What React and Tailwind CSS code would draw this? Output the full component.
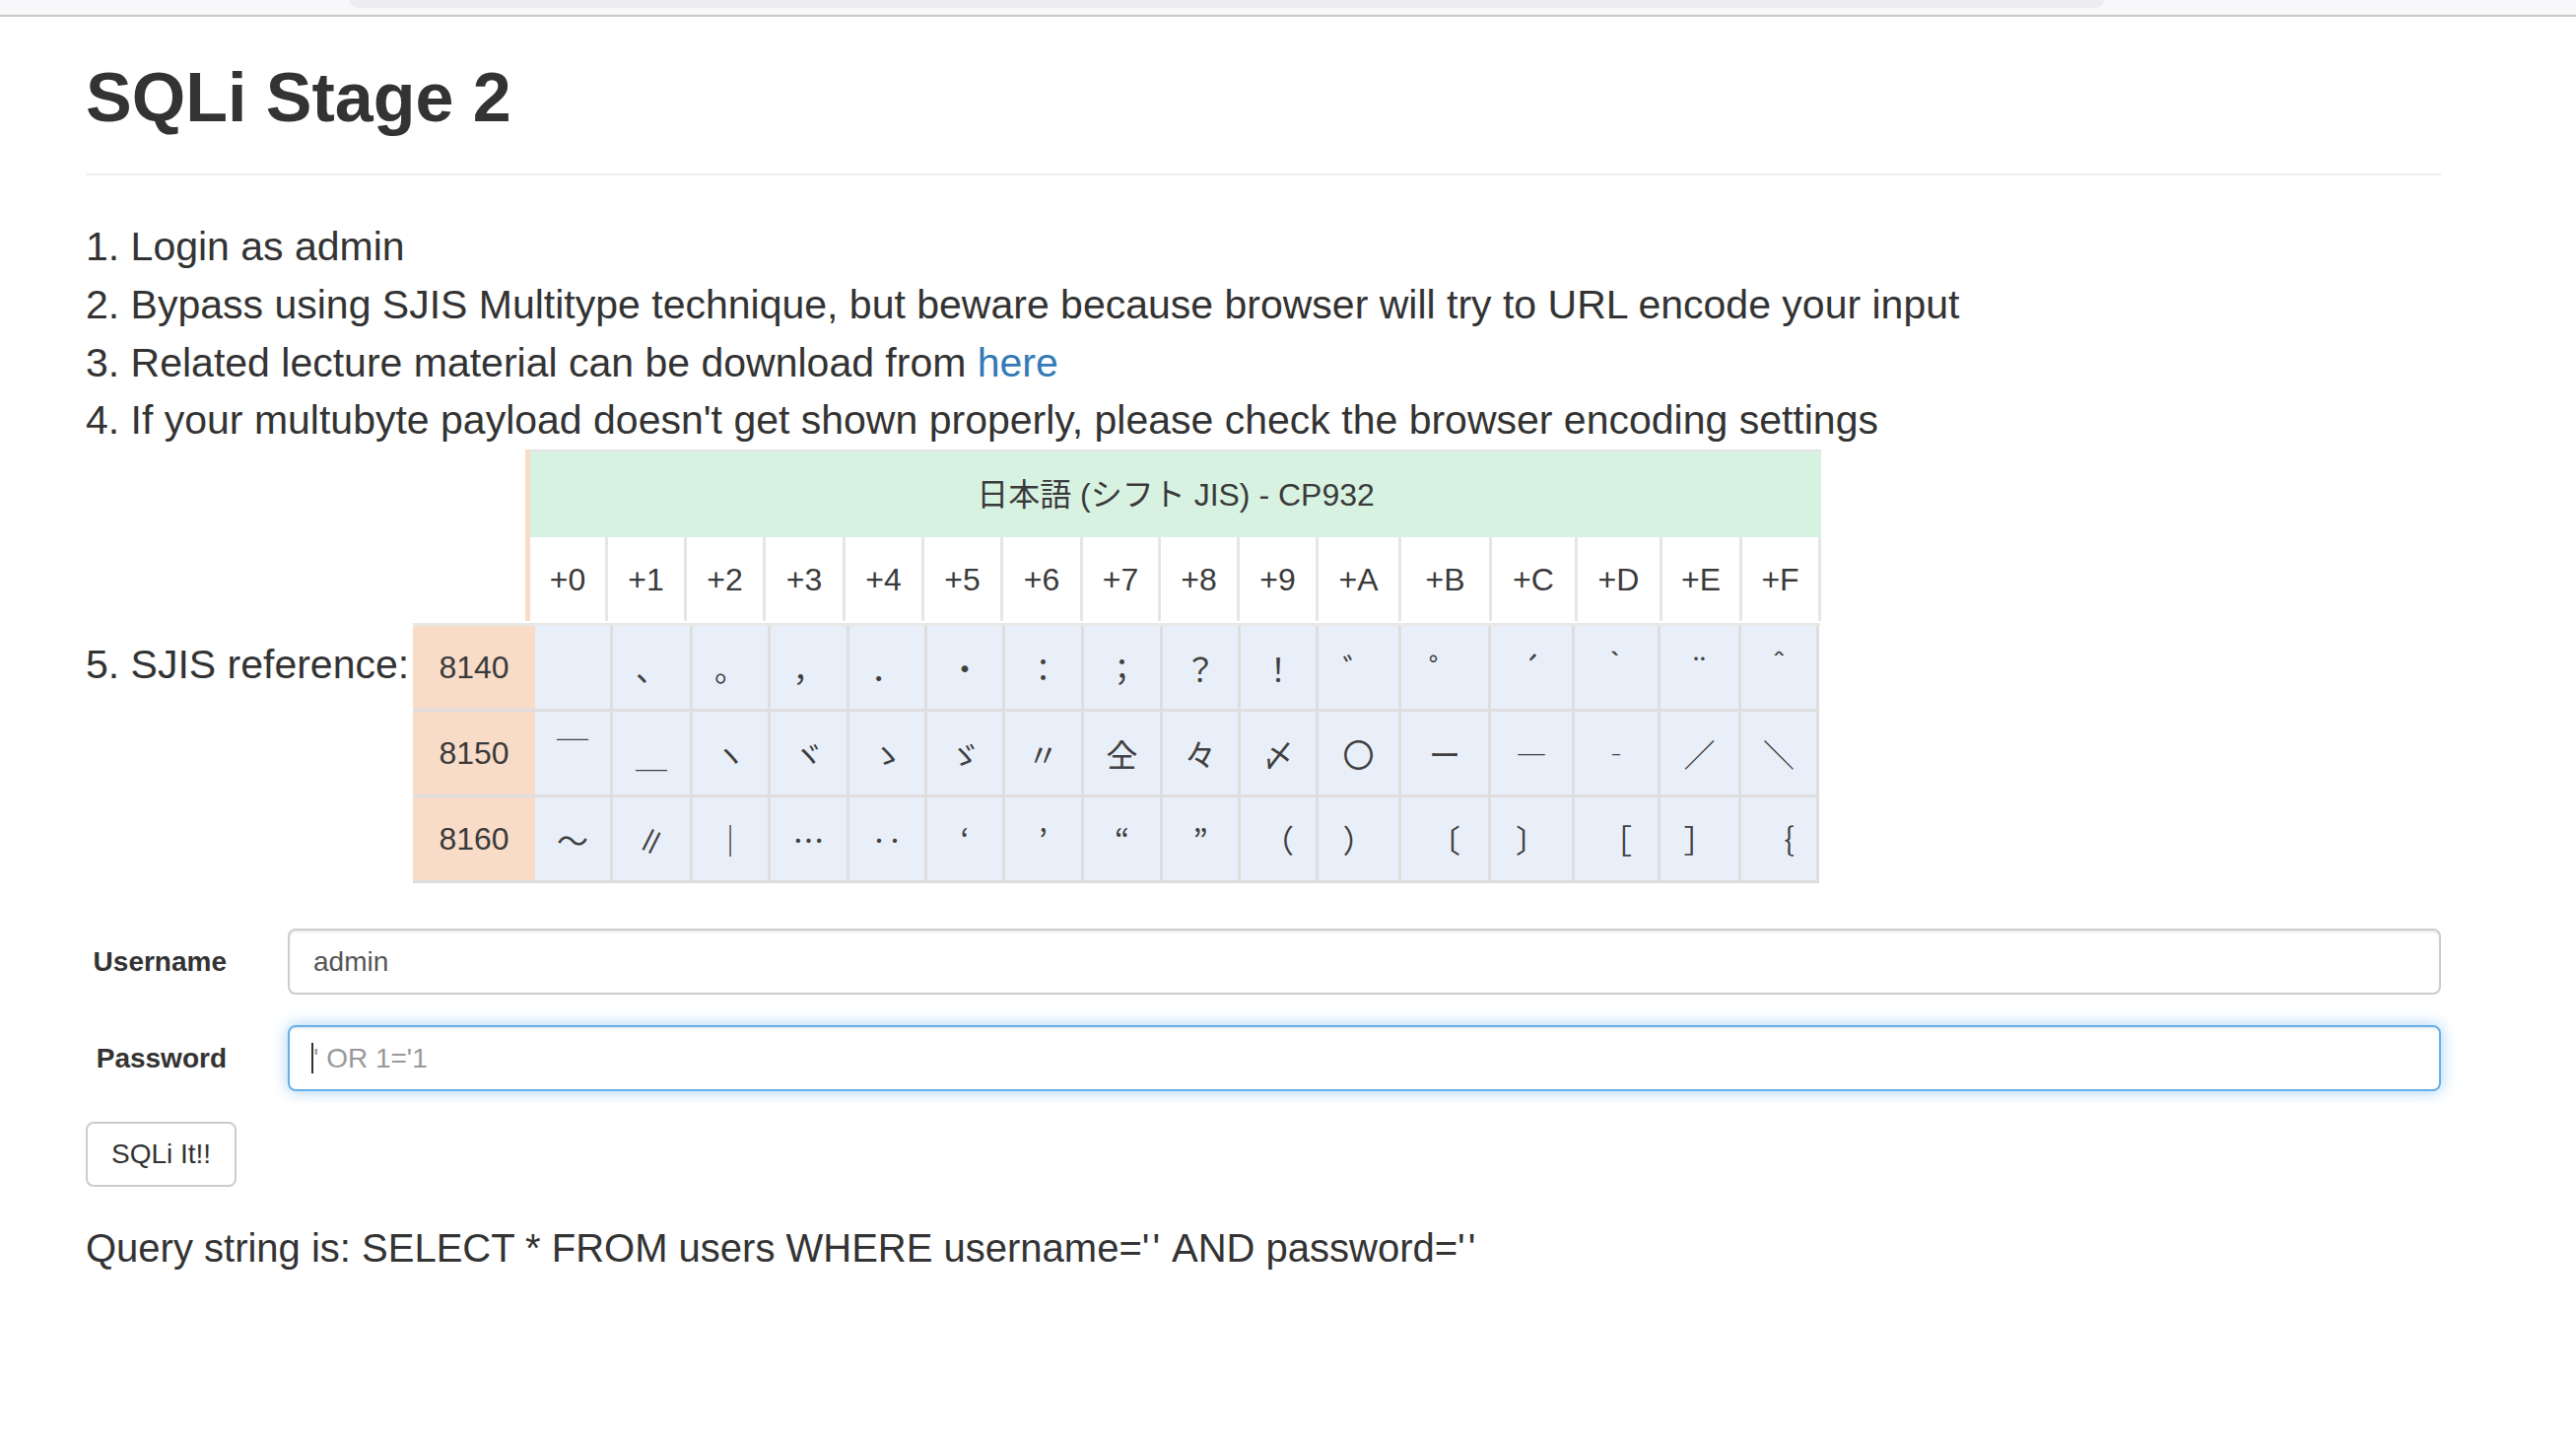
const HEAD = ['+0', '+1', '+2', '+3', '+4', '+5', '+6', '+7', '+8', '+9', '+A', '+B', '+C', '+D', '+E', '+F']

const ROWS = [
  {
    code: '8140',
    chars: ['\u3000', '、', '。', '，', '．', '・', '：', '；', '？', '！', '゛', '゜', '´', '｀', '¨', '＾'],
  },
  {
    code: '8150',
    chars: ['￣', '＿', 'ヽ', 'ヾ', 'ゝ', 'ゞ', '〃', '仝', '々', '〆', '〇', 'ー', '―', '‐', '／', '＼'],
  },
  {
    code: '8160',
    chars: ['～', '∥', '｜', '…', '‥', '‘', '’', '“', '”', '（', '）', '〔', '〕', '［', '］', '｛'],
  },
]

function SjisTable() {
  return (
    <div className="w-[1428px] font-['Liberation_Sans','Noto_Sans_CJK_JP',sans-serif] text-[32px] text-[#3a3a3a]">
      {/* header: title + offsets */}
      <div className="ml-[114px] w-[1315px] border-l-[5px] border-[#f8dcc8]">
        <div className="h-[89px] bg-[#d8f2e2] border-t-2 border-[#e2e2e2] flex items-center justify-center">
          日本語 (シフト JIS) - CP932
        </div>
        <div className="grid grid-cols-[79px_80px_80px_81px_80px_80px_81px_79px_80px_80px_84px_92px_87px_86px_81px_80px] h-[85px] bg-white">
          {HEAD.map((h) => (
            <div key={h} className="flex items-center justify-center border-r-[3px] border-[#e6e6e6]">
              {h}
            </div>
          ))}
        </div>
      </div>

      {/* body rows */}
      <div className="mt-[2px] border-t-[3px] border-[#e8e8e8]">
        {ROWS.map((row) => (
          <div
            key={row.code}
            className="grid grid-cols-[124px_79px_81px_79px_80px_79px_79px_80px_80px_79px_79px_84px_91px_85px_87px_82px_79px] h-[87px]"
          >
            <div className="flex items-center justify-center bg-[#f8dcc8] border-b-[3px] border-[#dedede]">
              {row.code}
            </div>
            {row.chars.map((c, i) => (
              <div
                key={i}
                className="flex items-center justify-center bg-[#e9eff9] border-r-[3px] border-b-[3px] border-[#dedede] font-['Noto_Sans_CJK_JP',sans-serif] text-[#404040]"
              >
                {c}
              </div>
            ))}
          </div>
        ))}
      </div>
    </div>
  )
}

export default function App() {
  return (
    <div className="min-h-screen bg-white text-[#333] font-['Liberation_Sans',Arial,sans-serif]">
      {/* browser chrome strip */}
      <div className="h-[17px] bg-[#f8f8fa] border-b-2 border-[#c9c9c9]">
        <div className="ml-[355px] w-[1780px] h-[8px] bg-[#ededf1] rounded-b-[12px]" />
      </div>

      <div className="w-[2477px] pl-[87px]">
        <h1 className="mt-[44px] text-[70px] leading-[1.1] font-bold">SQLi Stage 2</h1>
        <hr className="mt-[38px] border-t-2 border-[#eeeeee]" />

        <div className="mt-[43px] text-[41px] leading-[58.8px]">
          <div>1. Login as admin</div>
          <div>2. Bypass using SJIS Multitype technique, but beware because browser will try to URL encode your input</div>
          <div>
            3. Related lecture material can be download from <a className="text-[#337ab7]">here</a>
          </div>
          <div>4. If your multubyte payload doesn't get shown properly, please check the browser encoding settings</div>
        </div>

        <div className="flex">
          <div className="w-[332px] mt-[189px] text-[41px] leading-[58.8px] whitespace-nowrap">5. SJIS reference:</div>
          <SjisTable />
        </div>

        {/* login form */}
        <div className="mt-[46px] flex items-center">
          <label className="w-[143px] text-right text-[28px] font-bold">Username</label>
          <input
            defaultValue="admin"
            className="ml-[62px] flex-1 h-[67px] border-2 border-[#cccccc] rounded-[8px] px-[24px] text-[28px] text-[#555] shadow-[inset_0_2px_2px_rgba(0,0,0,0.075)] outline-none"
          />
        </div>
        <div className="mt-[31px] flex items-center">
          <label className="w-[143px] text-right text-[28px] font-bold">Password</label>
          <div className="relative ml-[62px] flex-1">
            <input
              placeholder="' OR 1='1"
              className="w-full h-[67px] border-2 border-[#66afe9] rounded-[8px] px-[24px] text-[28px] text-[#555] placeholder:text-[#999] shadow-[inset_0_2px_2px_rgba(0,0,0,0.075),0_0_16px_rgba(102,175,233,0.6)] outline-none"
            />
            <span className="absolute left-[24px] top-[18px] w-[2px] h-[31px] bg-[#333]" />
          </div>
        </div>

        <div className="mt-[31px]">
          <button className="h-[66px] px-[24px] border-2 border-[#cccccc] rounded-[8px] text-[28px] text-[#333] bg-white">
            SQLi It!!
          </button>
        </div>

        <div className="mt-[33px] text-[40px] leading-[58.8px]">
          Query string is: SELECT * FROM users WHERE username=<span className="tracking-[3px]">''</span> AND password=<span className="tracking-[3px]">''</span>
        </div>
      </div>
    </div>
  )
}
